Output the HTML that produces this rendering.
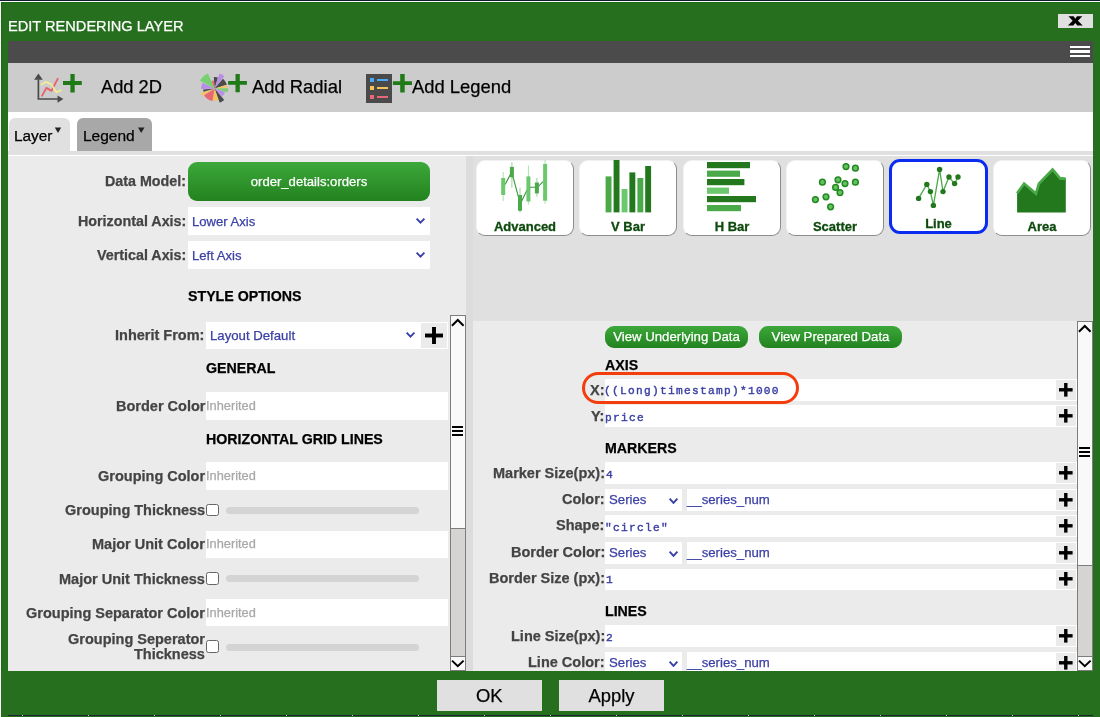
<!DOCTYPE html>
<html><head><meta charset="utf-8">
<style>
html,body{margin:0;padding:0;width:1100px;height:717px;overflow:hidden;background:#fff;font-family:"Liberation Sans",sans-serif;}
.a{position:absolute;}
.t{position:absolute;line-height:1;white-space:nowrap;will-change:transform;-webkit-text-stroke-width:0.25px;}
.lbl{position:absolute;line-height:1;white-space:nowrap;font-weight:bold;color:#444;font-size:14.5px;text-align:right;}
.hd{position:absolute;line-height:1;white-space:nowrap;font-weight:bold;color:#000;font-size:14.2px;}
.fld{position:absolute;background:#fff;}
.ph{position:absolute;line-height:1;white-space:nowrap;color:#a9a9a9;font-size:13px;}
.blue{color:#3b40a6;}
.mono{font-family:"Liberation Mono",monospace;}
.plusbox{position:absolute;background:#ebebeb;}
.card{position:absolute;background:#fff;border-radius:11px;box-shadow:0.5px 1px 0 0.5px #8a8a8a;}
.ctxt{position:absolute;line-height:1;white-space:nowrap;font-weight:bold;color:#14500f;font-size:13px;text-align:center;}
.gbtn{position:absolute;background:linear-gradient(#3ea83a,#237d1f);border-radius:9px;}
</style></head><body>
<!-- top line -->
<div class="a" style="left:0;top:0;width:1100px;height:1px;background:#141a30"></div>
<!-- frame -->
<div class="a" style="left:1px;top:2px;width:1099px;height:715px;background:#266f1e;box-shadow:inset 1px 1px 0 #1a6a10"></div>
<div class="t" style="left:8px;top:19.1px;font-size:14.6px;color:#fff">EDIT RENDERING LAYER</div>
<!-- close -->
<div class="a" style="left:1058px;top:14px;width:35px;height:14px;background:#e0e0e0"></div>
<svg class="a" style="left:1060px;top:14px" width="30" height="14" viewBox="1060 14 30 14"><path d="M1068.4 16.3 L1073.6 16.3 L1075.3 18.7 L1077 16.3 L1082.3 16.3 L1077.9 20.8 L1082.7 25.4 L1077.3 25.4 L1075.3 22.9 L1073.3 25.4 L1067.9 25.4 L1072.7 20.8 Z" fill="#000"/></svg>
<!-- dark bar -->
<div class="a" style="left:8px;top:41px;width:1085px;height:22px;background:#4b4b4b"></div>
<div class="a" style="left:1070.3px;top:45.9px;width:19.5px;height:2.3px;background:#fff"></div>
<div class="a" style="left:1070.3px;top:50.4px;width:19.5px;height:2.3px;background:#fff"></div>
<div class="a" style="left:1070.3px;top:55px;width:19.5px;height:2.3px;background:#fff"></div>
<!-- toolbar -->
<div class="a" style="left:8px;top:63px;width:1085px;height:49px;background:#cccccc"></div>
<div class="t" style="left:101px;top:78.2px;font-size:18.3px;color:#000">Add 2D</div>
<div class="t" style="left:251.5px;top:78.1px;font-size:18.4px;color:#000">Add Radial</div>
<div class="t" style="left:412px;top:78.1px;font-size:18.4px;color:#000">Add Legend</div>
<!-- 2D icon -->
<svg class="a" style="left:30px;top:68px" width="60" height="40" viewBox="30 68 60 40">
<polyline points="41.7,96.4 46.4,87.9 51.5,90.9 53.2,87.4 58.1,78.1" fill="none" stroke="#e8606a" stroke-width="1.8" stroke-linejoin="round"/>
<polyline points="40.6,84.9 45.8,81.9 49.1,83.3 51.8,84.9 56.2,92.3 61.6,90.1" fill="none" stroke="#f6f08c" stroke-width="1.6" stroke-linejoin="round"/>
<path d="M38.4 79.5 V99 H57.8" fill="none" stroke="#4a4a4a" stroke-width="1.7"/>
<path d="M38.4 73.5 L42.8 79.8 L34.1 79.8 Z" fill="#4a4a4a"/>
<path d="M63.4 99 L57.5 95.6 L57.5 102.8 Z" fill="#4a4a4a"/>
<path d="M70.4 74 H74.7 V81.1 H81.8 V84.9 H74.7 V92.5 H70.4 V84.9 H63 V81.1 H70.4 Z" fill="#1f7a17"/>
</svg>
<!-- radial icon -->
<svg class="a" style="left:196px;top:70px" width="54" height="36" viewBox="-18.6 -18.6 54 36">
<path d="M0 0L-0.8 -11.55A11.6 11.6 0 0 1 3.39 -11.09Z" fill="#4a4a4a"/><path d="M0 0L4.88 -15.03A15.8 15.8 0 0 1 9.73 -12.45Z" fill="#b88ee8"/><path d="M0 0L8.36 -9.96A13 13 0 0 1 12.36 -4.02Z" fill="#4a4a4a"/><path d="M0 0L11.92 -3.42A12.4 12.4 0 0 1 12.38 -0.65Z" fill="#f8c258"/><path d="M0 0L13.50 -0.24A13.5 13.5 0 0 1 12.98 3.72Z" fill="#78d070"/><path d="M0 0L10.46 3.40A11 11 0 0 1 7.64 7.91Z" fill="#b88ee8"/><path d="M0 0L9.64 11.49A15 15 0 0 1 5.13 14.10Z" fill="#4a4a4a"/><path d="M0 0L3.71 11.41A12 12 0 0 1 -1.67 11.88Z" fill="#f8c258"/><path d="M0 0L-2.17 12.31A12.5 12.5 0 0 1 -10.60 6.62Z" fill="#e86870"/><path d="M0 0L-12.56 7.25A14.5 14.5 0 0 1 -13.79 4.48Z" fill="#f8c258"/><path d="M0 0L-11.05 3.17A11.5 11.5 0 0 1 -11.47 0.80Z" fill="#4a4a4a"/><path d="M0 0L-13.49 0.47A13.5 13.5 0 0 1 -12.13 -5.92Z" fill="#b88ee8"/><path d="M0 0L-14.57 -7.75A16.5 16.5 0 0 1 -6.71 -15.07Z" fill="#78d070"/><path d="M0 0L-3.2 -7.3A8 8 0 0 1 -0.6 -7.98Z" fill="#e86870"/>
</svg>
<svg class="a" style="left:226px;top:72px" width="24" height="24" viewBox="226 72 24 24"><path d="M235.5 74 H239.8 V81 H246.9 V84.8 H239.8 V92.3 H235.5 V84.8 H228.1 V81 H235.5 Z" fill="#1f7a17"/></svg>
<!-- legend icon -->
<div class="a" style="left:366px;top:74px;width:26px;height:28.6px;background:#4a4a4a"></div>
<div class="a" style="left:370px;top:78px;width:4px;height:4px;background:#4aaaf5"></div>
<div class="a" style="left:377px;top:79px;width:11px;height:2.3px;background:#4aaaf5"></div>
<div class="a" style="left:370px;top:86.2px;width:4px;height:4px;background:#f5c45a"></div>
<div class="a" style="left:377px;top:87px;width:11px;height:2.3px;background:#f5c45a"></div>
<div class="a" style="left:370px;top:94.6px;width:4px;height:4.2px;background:#e8687a"></div>
<div class="a" style="left:377px;top:95.5px;width:11px;height:2.3px;background:#e8687a"></div>
<svg class="a" style="left:390px;top:72px" width="24" height="24" viewBox="390 72 24 24"><path d="M400.2 74.1 H404.7 V81.2 H412 V85 H404.7 V92.6 H400.2 V85 H392.9 V81.2 H400.2 Z" fill="#1f7a17"/></svg>
<!-- tab strip -->
<div class="a" style="left:8px;top:112px;width:1085px;height:39px;background:#fff"></div>
<div class="a" style="left:9px;top:118px;width:61px;height:33px;background:#e0e0e0;border-radius:6px 6px 0 0"></div>
<div class="a" style="left:77px;top:118px;width:75px;height:33px;background:#a8a8a8;border-radius:6px 6px 0 0"></div>
<div class="t" style="left:13.9px;top:128px;font-size:15.4px;color:#000">Layer</div>
<div class="t" style="left:83.3px;top:128px;font-size:15.5px;color:#000">Legend</div>
<!-- tab triangles -->
<svg class="a" style="left:50px;top:124px" width="100" height="12" viewBox="50 124 100 12"><path d="M54.8 127.5 H61.2 L58 133 Z" fill="#222"/><path d="M138 127.5 H144.5 L141.2 133 Z" fill="#222"/></svg>
<div class="a" style="left:8px;top:151px;width:1085px;height:4px;background:#e0e0e0"></div>
<div class="a" style="left:8px;top:155px;width:1085px;height:1px;background:#fff"></div>
<!-- left panel -->
<div class="a" style="left:8px;top:156px;width:458px;height:515px;background:#ebebeb"></div>
<!-- LEFT -->
<div class="t" style="right:913.6px;top:174.2px;font-size:14.3px;font-weight:bold;color:#444;text-align:right;">Data Model:</div>
<div class="a" style="left:188px;top:162px;width:242px;height:38.5px;background:linear-gradient(#3ca83a,#23821f);border-radius:9px"></div>
<div class="t" style="left:188px;width:242px;text-align:center;top:175.11px;font-size:13.1px;color:#fff">order_details:orders</div>
<div class="t" style="right:914px;top:214.2px;font-size:14.3px;font-weight:bold;color:#444;text-align:right;">Horizontal Axis:</div>
<div class="a" style="left:188px;top:207px;width:242px;height:28px;background:#fff;"></div>
<div class="t" style="left:191.9px;top:214.71px;font-size:13.1px;color:#3b40a6;">Lower Axis</div>
<div class="t" style="right:914px;top:248.2px;font-size:14.3px;font-weight:bold;color:#444;text-align:right;">Vertical Axis:</div>
<div class="a" style="left:188px;top:241px;width:242px;height:28px;background:#fff;"></div>
<div class="t" style="left:191.9px;top:248.71px;font-size:13.1px;color:#3b40a6;">Left Axis</div>
<svg class="a" style="left:415.2px;top:217.4px" width="11" height="7.4" viewBox="-1 -1 11 7.4"><path d="M0.6 0.6 L4.5 4.7 L8.4 0.6" fill="none" stroke="#3b40a6" stroke-width="1.9"/></svg>
<svg class="a" style="left:415.2px;top:251.4px" width="11" height="7.4" viewBox="-1 -1 11 7.4"><path d="M0.6 0.6 L4.5 4.7 L8.4 0.6" fill="none" stroke="#3b40a6" stroke-width="1.9"/></svg>
<div class="t" style="left:188.4px;top:289.38px;font-size:14.2px;font-weight:bold;color:#000">STYLE OPTIONS</div>
<div class="t" style="right:895.5px;top:328.03px;font-size:14.5px;font-weight:bold;color:#444;text-align:right;">Inherit From:</div>
<div class="a" style="left:206px;top:322px;width:242px;height:26.7px;background:#fff;"></div>
<div class="t" style="left:209.7px;top:328.83px;font-size:13.2px;color:#3b40a6;">Layout Default</div>
<svg class="a" style="left:405.2px;top:331.4px" width="11" height="7.4" viewBox="-1 -1 11 7.4"><path d="M0.6 0.6 L4.5 4.7 L8.4 0.6" fill="none" stroke="#3b40a6" stroke-width="1.9"/></svg>
<div class="a" style="left:421px;top:323px;width:26px;height:25px;background:#ebebeb;"></div>
<svg class="a" style="left:425.0px;top:327.0px" width="18" height="17"><rect x="7.05" y="0" width="3.9" height="17" fill="#000"/><rect x="0" y="6.55" width="18" height="3.9" fill="#000"/></svg>
<div class="t" style="left:205.7px;top:360.58px;font-size:14.2px;font-weight:bold;color:#000">GENERAL</div>
<div class="t" style="right:895px;top:398.93px;font-size:14.5px;font-weight:bold;color:#444;text-align:right;">Border Color</div>
<div class="a" style="left:206px;top:392px;width:242px;height:28px;background:#fff;"></div>
<div class="t" style="left:206.1px;top:400.36px;font-size:12.8px;color:#a8a8a8;">Inherited</div>
<div class="t" style="left:205.7px;top:432.08px;font-size:14.2px;font-weight:bold;color:#000">HORIZONTAL GRID LINES</div>
<div class="t" style="right:895px;top:469.03px;font-size:14.5px;font-weight:bold;color:#444;text-align:right;">Grouping Color</div>
<div class="a" style="left:206px;top:462px;width:242px;height:28px;background:#fff;"></div>
<div class="t" style="left:206.1px;top:469.76px;font-size:12.8px;color:#a8a8a8;">Inherited</div>
<div class="t" style="right:895px;top:502.53px;font-size:14.5px;font-weight:bold;color:#444;text-align:right;">Grouping Thickness</div>
<div class="a" style="left:206.2px;top:503.5px;width:12.8px;height:12.6px;background:#fff;box-sizing:border-box;border:1px solid #666;border-radius:2.5px"></div>
<div class="a" style="left:226px;top:506.7px;width:193px;height:7.3px;background:#d4d4d4;border-radius:4px"></div>
<div class="t" style="right:895px;top:537.13px;font-size:14.5px;font-weight:bold;color:#444;text-align:right;">Major Unit Color</div>
<div class="a" style="left:206px;top:531px;width:242px;height:27px;background:#fff;"></div>
<div class="t" style="left:206.1px;top:537.76px;font-size:12.8px;color:#a8a8a8;">Inherited</div>
<div class="t" style="right:895px;top:571.63px;font-size:14.5px;font-weight:bold;color:#444;text-align:right;">Major Unit Thickness</div>
<div class="a" style="left:206.2px;top:572px;width:12.8px;height:12.6px;background:#fff;box-sizing:border-box;border:1px solid #666;border-radius:2.5px"></div>
<div class="a" style="left:226px;top:575.2px;width:193px;height:7.3px;background:#d4d4d4;border-radius:4px"></div>
<div class="t" style="right:895px;top:606.23px;font-size:14.5px;font-weight:bold;color:#444;text-align:right;">Grouping Separator Color</div>
<div class="a" style="left:206px;top:599px;width:242px;height:27px;background:#fff;"></div>
<div class="t" style="left:206.1px;top:606.86px;font-size:12.8px;color:#a8a8a8;">Inherited</div>
<div class="t" style="right:895px;top:631.63px;font-size:14.5px;font-weight:bold;color:#444;text-align:right;">Grouping Seperator</div>
<div class="t" style="right:895px;top:647.33px;font-size:14.5px;font-weight:bold;color:#444;text-align:right;">Thickness</div>
<div class="a" style="left:206.2px;top:640.3px;width:12.8px;height:12.6px;background:#fff;box-sizing:border-box;border:1px solid #666;border-radius:2.5px"></div>
<div class="a" style="left:226px;top:643.5px;width:193px;height:7.3px;background:#d4d4d4;border-radius:4px"></div>
<div class="a" style="left:450px;top:315px;width:16px;height:355.5px;background:#d6d4d2;box-sizing:border-box;border:1px solid #7d7d7d"></div>
<div class="a" style="left:450px;top:315px;width:16px;height:17.5px;background:#f9f9f9;box-sizing:border-box;border:1px solid #7d7d7d;border-bottom-width:1.5px"></div>
<svg class="a" style="left:450px;top:315px" width="16" height="17"><path d="M1.9 10.8 L7.8 5 L13.6 10.8" fill="none" stroke="#000" stroke-width="2"/></svg>
<div class="a" style="left:450px;top:332px;width:16px;height:196.5px;background:#f9f9f9;box-sizing:border-box;border:1px solid #7d7d7d;border-top:0"></div>
<div class="a" style="left:452.3px;top:426.15px;width:11px;height:2px;background:#000"></div>
<div class="a" style="left:452.3px;top:430.25px;width:11px;height:2px;background:#000"></div>
<div class="a" style="left:452.3px;top:434.35px;width:11px;height:2px;background:#000"></div>
<div class="a" style="left:450px;top:655.5px;width:16px;height:15px;background:#f9f9f9;box-sizing:border-box;border:1px solid #7d7d7d"></div>
<svg class="a" style="left:450px;top:655.5px" width="16" height="15"><path d="M2 4.6 L7.8 10.2 L13.6 4.6" fill="none" stroke="#000" stroke-width="2"/></svg>
<!-- /LEFT -->
<!-- right column -->
<div class="a" style="left:466px;top:156px;width:7px;height:515px;background:#dcdcdc"></div>
<div class="a" style="left:473px;top:156px;width:620px;height:165px;background:#e0e0e0"></div>
<div class="a" style="left:473px;top:321px;width:620px;height:350px;background:#ebebeb"></div>
<!-- CARDS -->
<div class="a" style="left:475.6px;top:159.5px;width:98.0px;height:76.0px;background:#fff;box-sizing:border-box;border:1px solid;border-color:#f2f2f2 #8c8c8c #8c8c8c #f2f2f2;border-radius:9px"></div>
<div class="t" style="left:475.6px;width:98px;text-align:center;top:219.5px;font-size:13px;font-weight:bold;color:#0e4a0e;-webkit-text-stroke:0.3px #0e4a0e">Advanced</div>
<div class="a" style="left:579px;top:159.5px;width:98px;height:76.0px;background:#fff;box-sizing:border-box;border:1px solid;border-color:#f2f2f2 #8c8c8c #8c8c8c #f2f2f2;border-radius:9px"></div>
<div class="t" style="left:579px;width:98px;text-align:center;top:219.5px;font-size:13px;font-weight:bold;color:#0e4a0e;-webkit-text-stroke:0.3px #0e4a0e">V Bar</div>
<div class="a" style="left:683px;top:159.5px;width:98px;height:76.0px;background:#fff;box-sizing:border-box;border:1px solid;border-color:#f2f2f2 #8c8c8c #8c8c8c #f2f2f2;border-radius:9px"></div>
<div class="t" style="left:683px;width:98px;text-align:center;top:219.5px;font-size:13px;font-weight:bold;color:#0e4a0e;-webkit-text-stroke:0.3px #0e4a0e">H Bar</div>
<div class="a" style="left:786px;top:159.5px;width:98px;height:76.0px;background:#fff;box-sizing:border-box;border:1px solid;border-color:#f2f2f2 #8c8c8c #8c8c8c #f2f2f2;border-radius:9px"></div>
<div class="t" style="left:786px;width:98px;text-align:center;top:219.5px;font-size:13px;font-weight:bold;color:#0e4a0e;-webkit-text-stroke:0.3px #0e4a0e">Scatter</div>
<div class="a" style="left:889px;top:159px;width:99px;height:75px;background:#fff;box-sizing:border-box;border:3px solid #0a2cf0;border-radius:11px"></div>
<div class="t" style="left:889px;width:99px;text-align:center;top:217.4px;font-size:13px;font-weight:bold;color:#0e4a0e;-webkit-text-stroke:0.3px #0e4a0e">Line</div>
<div class="a" style="left:992.6px;top:159.5px;width:98.0px;height:76.0px;background:#fff;box-sizing:border-box;border:1px solid;border-color:#f2f2f2 #8c8c8c #8c8c8c #f2f2f2;border-radius:9px"></div>
<div class="t" style="left:992.6px;width:98px;text-align:center;top:219.5px;font-size:13px;font-weight:bold;color:#0e4a0e;-webkit-text-stroke:0.3px #0e4a0e">Area</div>
<svg class="a" style="left:0;top:0" width="1100" height="717" viewBox="0 0 1100 717"><polyline points="505.1,184.5 510,175.2 513.2,177.6 518.4,196.6 522.1,200.3 527,190.1 530.6,187.3 535,187.3 538.7,186.1 543.1,181.7" fill="none" stroke="#3a963a" stroke-width="1.1"/><rect x="502.7" y="172" width="1" height="29" fill="#6cc86c" opacity="0.55"/><rect x="501.2" y="178" width="4" height="17" fill="#6cc86c"/><rect x="511.4" y="162.3" width="1" height="25.399999999999977" fill="#4aaa4a" opacity="0.55"/><rect x="509.9" y="166.9" width="4" height="10.299999999999983" fill="#4aaa4a"/><rect x="519.5" y="187.7" width="1" height="24.700000000000017" fill="#4aaa4a" opacity="0.55"/><rect x="518" y="195" width="4" height="15.800000000000011" fill="#4aaa4a"/><rect x="527.9" y="165.5" width="1" height="39.19999999999999" fill="#6cc86c" opacity="0.55"/><rect x="526.4" y="176.4" width="4" height="25.099999999999994" fill="#6cc86c"/><rect x="536.4" y="178" width="1" height="18.599999999999994" fill="#4aaa4a" opacity="0.55"/><rect x="534.9" y="182.5" width="4" height="10.900000000000006" fill="#4aaa4a"/><rect x="544.6" y="159.8" width="1" height="44.099999999999994" fill="#6cc86c" opacity="0.55"/><rect x="543.1" y="163.9" width="4" height="36.79999999999998" fill="#6cc86c"/><rect x="605.6" y="176.4" width="5.9" height="36.0" fill="#4aaa4a"/><rect x="613.6" y="160" width="5.9" height="52.4" fill="#23781e"/><rect x="621.6" y="189" width="5.9" height="23.4" fill="#6cc86c"/><rect x="629.4" y="172.4" width="5.9" height="40.0" fill="#23781e"/><rect x="637.4" y="178" width="5.9" height="34.4" fill="#4aaa4a"/><rect x="645.2" y="166" width="5.9" height="46.4" fill="#23781e"/><rect x="707" y="162" width="43" height="6.2" fill="#23781e"/><rect x="707" y="170.6" width="33" height="6.2" fill="#4aaa4a"/><rect x="707" y="179" width="37.4" height="6.2" fill="#23781e"/><rect x="707" y="187.6" width="22" height="6.2" fill="#6cc86c"/><rect x="707" y="196" width="49" height="6.2" fill="#23781e"/><rect x="707" y="205" width="34" height="6.2" fill="#4aaa4a"/><circle cx="846" cy="166.6" r="2.85" fill="#62c262" stroke="#238a20" stroke-width="1.5"/><circle cx="855.4" cy="168.2" r="2.85" fill="#62c262" stroke="#238a20" stroke-width="1.5"/><circle cx="822.4" cy="182.2" r="2.85" fill="#62c262" stroke="#238a20" stroke-width="1.5"/><circle cx="838" cy="179.79999999999998" r="2.85" fill="#62c262" stroke="#238a20" stroke-width="1.5"/><circle cx="845" cy="183.6" r="2.85" fill="#62c262" stroke="#238a20" stroke-width="1.5"/><circle cx="855.4" cy="182.2" r="2.85" fill="#62c262" stroke="#238a20" stroke-width="1.5"/><circle cx="835.6" cy="187.39999999999998" r="2.85" fill="#62c262" stroke="#238a20" stroke-width="1.5"/><circle cx="840" cy="192.6" r="2.85" fill="#62c262" stroke="#238a20" stroke-width="1.5"/><circle cx="826" cy="196.79999999999998" r="2.85" fill="#62c262" stroke="#238a20" stroke-width="1.5"/><circle cx="815.4" cy="199.6" r="2.85" fill="#62c262" stroke="#238a20" stroke-width="1.5"/><circle cx="830.6" cy="206.79999999999998" r="2.85" fill="#62c262" stroke="#238a20" stroke-width="1.5"/><polyline points="918.6,198.4 926.8,184.4 930.4,191.6 933.4,205.4 939.6,169.4 943,191.6 949,177 954.6,183.6 958,177" fill="none" stroke="#4aaa4a" stroke-width="1.3"/><circle cx="918.6" cy="198.4" r="2.7" fill="#23781e"/><circle cx="926.8" cy="184.4" r="2.7" fill="#23781e"/><circle cx="930.4" cy="191.6" r="2.7" fill="#23781e"/><circle cx="933.4" cy="205.4" r="2.7" fill="#23781e"/><circle cx="939.6" cy="169.4" r="2.7" fill="#23781e"/><circle cx="943" cy="191.6" r="2.7" fill="#23781e"/><circle cx="949" cy="177" r="2.7" fill="#23781e"/><circle cx="954.6" cy="183.6" r="2.7" fill="#23781e"/><circle cx="958" cy="177" r="2.7" fill="#23781e"/><path d="M1017.1 212.6 V192.1 L1024.1 182.4 L1035.9 192.4 L1038.9 182.4 L1052.6 168.3 L1060.1 177.2 L1065.8 177.8 V212.6 Z" fill="#23781e"/><polyline points="1017.1,193.3 1024.1,183.6 1035.9,193.6 1038.9,183.6 1052.6,169.5 1060.1,178.4 1065.8,179" fill="none" stroke="#4aaa4a" stroke-width="2.6" stroke-linejoin="miter"/></svg>
<!-- /CARDS -->
<!-- PROPS -->
<div class="a" style="left:605px;top:326px;width:143px;height:22px;background:linear-gradient(#3ca83a,#23821f);border-radius:9px"></div>
<div class="t" style="left:605px;width:143px;text-align:center;top:330.03px;font-size:13.2px;color:#fff">View Underlying Data</div>
<div class="a" style="left:759px;top:326px;width:143px;height:22px;background:linear-gradient(#3ca83a,#23821f);border-radius:9px"></div>
<div class="t" style="left:759px;width:143px;text-align:center;top:330.03px;font-size:13.2px;color:#fff">View Prepared Data</div>
<div class="t" style="left:605px;top:357.98px;font-size:14.2px;font-weight:bold;color:#000">AXIS</div>
<div class="a" style="left:605px;top:379px;width:472px;height:22px;background:#fff;"></div>
<div class="a" style="left:1056px;top:380px;width:20px;height:20px;background:#ebebeb;"></div>
<svg class="a" style="left:1059.2px;top:383.2px" width="13.6" height="13.6"><rect x="5.1" y="0" width="3.4" height="13.6" fill="#000"/><rect x="0" y="5.1" width="13.6" height="3.4" fill="#000"/></svg>
<div class="t" style="right:495.2px;top:382.93px;font-size:14.5px;font-weight:bold;color:#444;text-align:right;">X:</div>
<div class="t" style="left:604.2px;top:386.22px;font-size:11.2px;color:#3b40a6;font-family:'Liberation Mono',monospace;letter-spacing:1.28px;-webkit-text-stroke:0.4px #3b40a6">((Long)timestamp)*1000</div>
<div class="a" style="left:605px;top:405px;width:472px;height:22px;background:#fff;"></div>
<div class="a" style="left:1056px;top:406px;width:20px;height:20px;background:#ebebeb;"></div>
<svg class="a" style="left:1059.2px;top:409.2px" width="13.6" height="13.6"><rect x="5.1" y="0" width="3.4" height="13.6" fill="#000"/><rect x="0" y="5.1" width="13.6" height="3.4" fill="#000"/></svg>
<div class="t" style="right:495.2px;top:408.73px;font-size:14.5px;font-weight:bold;color:#444;text-align:right;">Y:</div>
<div class="t" style="left:605px;top:413.02px;font-size:11.2px;color:#3b40a6;font-family:'Liberation Mono',monospace;letter-spacing:1.28px;-webkit-text-stroke:0.4px #3b40a6">price</div>
<div class="t" style="left:605px;top:441.28px;font-size:14.2px;font-weight:bold;color:#000">MARKERS</div>
<div class="a" style="left:605px;top:462px;width:472px;height:21.8px;background:#fff;"></div>
<div class="a" style="left:1056px;top:463px;width:20px;height:19.8px;background:#ebebeb;"></div>
<svg class="a" style="left:1059.2px;top:466.1px" width="13.6" height="13.6"><rect x="5.1" y="0" width="3.4" height="13.6" fill="#000"/><rect x="0" y="5.1" width="13.6" height="3.4" fill="#000"/></svg>
<div class="t" style="right:495.2px;top:465.63px;font-size:14.5px;font-weight:bold;color:#444;text-align:right;">Marker Size(px):</div>
<div class="t" style="left:605.5px;top:469.92px;font-size:11.2px;color:#3b40a6;font-family:'Liberation Mono',monospace;letter-spacing:1.28px;-webkit-text-stroke:0.4px #3b40a6">4</div>
<div class="a" style="left:605px;top:489.3px;width:76.8px;height:21.3px;background:#fff;"></div>
<div class="t" style="left:608.7px;top:492.93px;font-size:13.2px;color:#3b40a6;">Series</div>
<svg class="a" style="left:667.7px;top:496.6px" width="11" height="7.6" viewBox="-1 -1 11 7.6"><path d="M0.6 0.6 L4.5 4.8999999999999995 L8.4 0.6" fill="none" stroke="#3b40a6" stroke-width="1.9"/></svg>
<div class="a" style="left:686.8px;top:489.3px;width:390.2px;height:21.3px;background:#fff;"></div>
<div class="t" style="left:687px;top:492.93px;font-size:13.2px;color:#3b40a6;">__series_num</div>
<div class="a" style="left:1056px;top:490.3px;width:20px;height:19.3px;background:#ebebeb;"></div>
<svg class="a" style="left:1059.2px;top:493.15px" width="13.6" height="13.6"><rect x="5.1" y="0" width="3.4" height="13.6" fill="#000"/><rect x="0" y="5.1" width="13.6" height="3.4" fill="#000"/></svg>
<div class="t" style="right:495.2px;top:491.83px;font-size:14.5px;font-weight:bold;color:#444;text-align:right;">Color:</div>
<div class="a" style="left:605px;top:515.4px;width:472px;height:21.4px;background:#fff;"></div>
<div class="a" style="left:1056px;top:516.4px;width:20px;height:19.4px;background:#ebebeb;"></div>
<svg class="a" style="left:1059.2px;top:519.3px" width="13.6" height="13.6"><rect x="5.1" y="0" width="3.4" height="13.6" fill="#000"/><rect x="0" y="5.1" width="13.6" height="3.4" fill="#000"/></svg>
<div class="t" style="right:495.2px;top:518.43px;font-size:14.5px;font-weight:bold;color:#444;text-align:right;">Shape:</div>
<div class="t" style="left:605px;top:522.72px;font-size:11.2px;color:#3b40a6;font-family:'Liberation Mono',monospace;letter-spacing:1.28px;-webkit-text-stroke:0.4px #3b40a6">"circle"</div>
<div class="a" style="left:605px;top:542.3px;width:76.8px;height:21.4px;background:#fff;"></div>
<div class="t" style="left:608.7px;top:546.43px;font-size:13.2px;color:#3b40a6;">Series</div>
<svg class="a" style="left:667.7px;top:549.5999999999999px" width="11" height="7.6" viewBox="-1 -1 11 7.6"><path d="M0.6 0.6 L4.5 4.8999999999999995 L8.4 0.6" fill="none" stroke="#3b40a6" stroke-width="1.9"/></svg>
<div class="a" style="left:686.8px;top:542.3px;width:390.2px;height:21.4px;background:#fff;"></div>
<div class="t" style="left:687px;top:546.43px;font-size:13.2px;color:#3b40a6;">__series_num</div>
<div class="a" style="left:1056px;top:543.3px;width:20px;height:19.4px;background:#ebebeb;"></div>
<svg class="a" style="left:1059.2px;top:546.2px" width="13.6" height="13.6"><rect x="5.1" y="0" width="3.4" height="13.6" fill="#000"/><rect x="0" y="5.1" width="13.6" height="3.4" fill="#000"/></svg>
<div class="t" style="right:495.2px;top:545.33px;font-size:14.5px;font-weight:bold;color:#444;text-align:right;">Border Color:</div>
<div class="a" style="left:605px;top:568.5px;width:472px;height:21.3px;background:#fff;"></div>
<div class="a" style="left:1056px;top:569.5px;width:20px;height:19.3px;background:#ebebeb;"></div>
<svg class="a" style="left:1059.2px;top:572.35px" width="13.6" height="13.6"><rect x="5.1" y="0" width="3.4" height="13.6" fill="#000"/><rect x="0" y="5.1" width="13.6" height="3.4" fill="#000"/></svg>
<div class="t" style="right:495.2px;top:571.03px;font-size:14.5px;font-weight:bold;color:#444;text-align:right;">Border Size (px):</div>
<div class="t" style="left:605.5px;top:575.32px;font-size:11.2px;color:#3b40a6;font-family:'Liberation Mono',monospace;letter-spacing:1.28px;-webkit-text-stroke:0.4px #3b40a6">1</div>
<div class="t" style="left:605px;top:604.48px;font-size:14.2px;font-weight:bold;color:#000">LINES</div>
<div class="a" style="left:605px;top:625.1px;width:472px;height:21.8px;background:#fff;"></div>
<div class="a" style="left:1056px;top:626.1px;width:20px;height:19.8px;background:#ebebeb;"></div>
<svg class="a" style="left:1059.2px;top:629.2px" width="13.6" height="13.6"><rect x="5.1" y="0" width="3.4" height="13.6" fill="#000"/><rect x="0" y="5.1" width="13.6" height="3.4" fill="#000"/></svg>
<div class="t" style="right:495.2px;top:628.53px;font-size:14.5px;font-weight:bold;color:#444;text-align:right;">Line Size(px):</div>
<div class="t" style="left:605.5px;top:632.82px;font-size:11.2px;color:#3b40a6;font-family:'Liberation Mono',monospace;letter-spacing:1.28px;-webkit-text-stroke:0.4px #3b40a6">2</div>
<div class="a" style="left:605px;top:652.2px;width:76.8px;height:21.3px;background:#fff;"></div>
<div class="t" style="left:608.7px;top:655.83px;font-size:13.2px;color:#3b40a6;">Series</div>
<svg class="a" style="left:667.7px;top:659.5px" width="11" height="7.6" viewBox="-1 -1 11 7.6"><path d="M0.6 0.6 L4.5 4.8999999999999995 L8.4 0.6" fill="none" stroke="#3b40a6" stroke-width="1.9"/></svg>
<div class="a" style="left:686.8px;top:652.2px;width:390.2px;height:21.3px;background:#fff;"></div>
<div class="t" style="left:687px;top:655.83px;font-size:13.2px;color:#3b40a6;">__series_num</div>
<div class="a" style="left:1056px;top:653.2px;width:20px;height:19.3px;background:#ebebeb;"></div>
<svg class="a" style="left:1059.2px;top:656.05px" width="13.6" height="13.6"><rect x="5.1" y="0" width="3.4" height="13.6" fill="#000"/><rect x="0" y="5.1" width="13.6" height="3.4" fill="#000"/></svg>
<div class="t" style="right:495.2px;top:654.73px;font-size:14.5px;font-weight:bold;color:#444;text-align:right;">Line Color:</div>
<div class="a" style="left:582.3px;top:372.2px;width:216.5px;height:32.3px;box-sizing:border-box;border:3.6px solid #f43d0c;border-radius:16px"></div>
<div class="a" style="left:1077px;top:321px;width:16px;height:349.5px;background:#d6d4d2;box-sizing:border-box;border:1px solid #7d7d7d"></div>
<div class="a" style="left:1077px;top:321px;width:16px;height:17.5px;background:#f9f9f9;box-sizing:border-box;border:1px solid #7d7d7d;border-bottom-width:1.5px"></div>
<svg class="a" style="left:1077px;top:321px" width="16" height="17"><path d="M1.9 10.8 L7.8 5 L13.6 10.8" fill="none" stroke="#000" stroke-width="2"/></svg>
<div class="a" style="left:1077px;top:338px;width:16px;height:227.5px;background:#f9f9f9;box-sizing:border-box;border:1px solid #7d7d7d;border-top:0"></div>
<div class="a" style="left:1079.3px;top:446.65px;width:11px;height:2px;background:#000"></div>
<div class="a" style="left:1079.3px;top:450.75px;width:11px;height:2px;background:#000"></div>
<div class="a" style="left:1079.3px;top:454.85px;width:11px;height:2px;background:#000"></div>
<div class="a" style="left:1077px;top:655.5px;width:16px;height:15px;background:#f9f9f9;box-sizing:border-box;border:1px solid #7d7d7d"></div>
<svg class="a" style="left:1077px;top:655.5px" width="16" height="15"><path d="M2 4.6 L7.8 10.2 L13.6 4.6" fill="none" stroke="#000" stroke-width="2"/></svg>
<!-- /PROPS -->
<!-- bottom -->
<div class="a" style="left:1px;top:671px;width:1099px;height:46px;background:#266f1e"></div>
<div class="a" style="left:1093px;top:156px;width:7px;height:515px;background:#266f1e"></div>
<div class="a" style="left:437px;top:680px;width:104.7px;height:30.7px;background:#e0e0e0"></div>
<div class="a" style="left:559px;top:680px;width:105px;height:30.7px;background:#e0e0e0"></div>
<div class="t" style="left:437px;width:104.7px;text-align:center;top:687.2px;font-size:18.4px;color:#000">OK</div>
<div class="t" style="left:559px;width:105px;text-align:center;top:687.2px;font-size:18.4px;color:#000">Apply</div>
<div class="a" style="left:8px;top:715px;width:1085px;height:1px;background:#1e2433"></div>
<div class="a" style="left:22px;top:714.5px;width:1px;height:1.5px;background:#b8d0b0"></div><div class="a" style="left:88px;top:714.5px;width:1px;height:1.5px;background:#b8d0b0"></div><div class="a" style="left:154px;top:714.5px;width:1px;height:1.5px;background:#b8d0b0"></div><div class="a" style="left:220px;top:714.5px;width:1px;height:1.5px;background:#b8d0b0"></div><div class="a" style="left:286px;top:714.5px;width:1px;height:1.5px;background:#b8d0b0"></div><div class="a" style="left:352px;top:714.5px;width:1px;height:1.5px;background:#b8d0b0"></div><div class="a" style="left:418px;top:714.5px;width:1px;height:1.5px;background:#b8d0b0"></div><div class="a" style="left:484px;top:714.5px;width:1px;height:1.5px;background:#b8d0b0"></div><div class="a" style="left:550px;top:714.5px;width:1px;height:1.5px;background:#b8d0b0"></div><div class="a" style="left:616px;top:714.5px;width:1px;height:1.5px;background:#b8d0b0"></div><div class="a" style="left:682px;top:714.5px;width:1px;height:1.5px;background:#b8d0b0"></div><div class="a" style="left:748px;top:714.5px;width:1px;height:1.5px;background:#b8d0b0"></div><div class="a" style="left:814px;top:714.5px;width:1px;height:1.5px;background:#b8d0b0"></div><div class="a" style="left:880px;top:714.5px;width:1px;height:1.5px;background:#b8d0b0"></div><div class="a" style="left:946px;top:714.5px;width:1px;height:1.5px;background:#b8d0b0"></div><div class="a" style="left:1012px;top:714.5px;width:1px;height:1.5px;background:#b8d0b0"></div><div class="a" style="left:1078px;top:714.5px;width:1px;height:1.5px;background:#b8d0b0"></div>
</body></html>
